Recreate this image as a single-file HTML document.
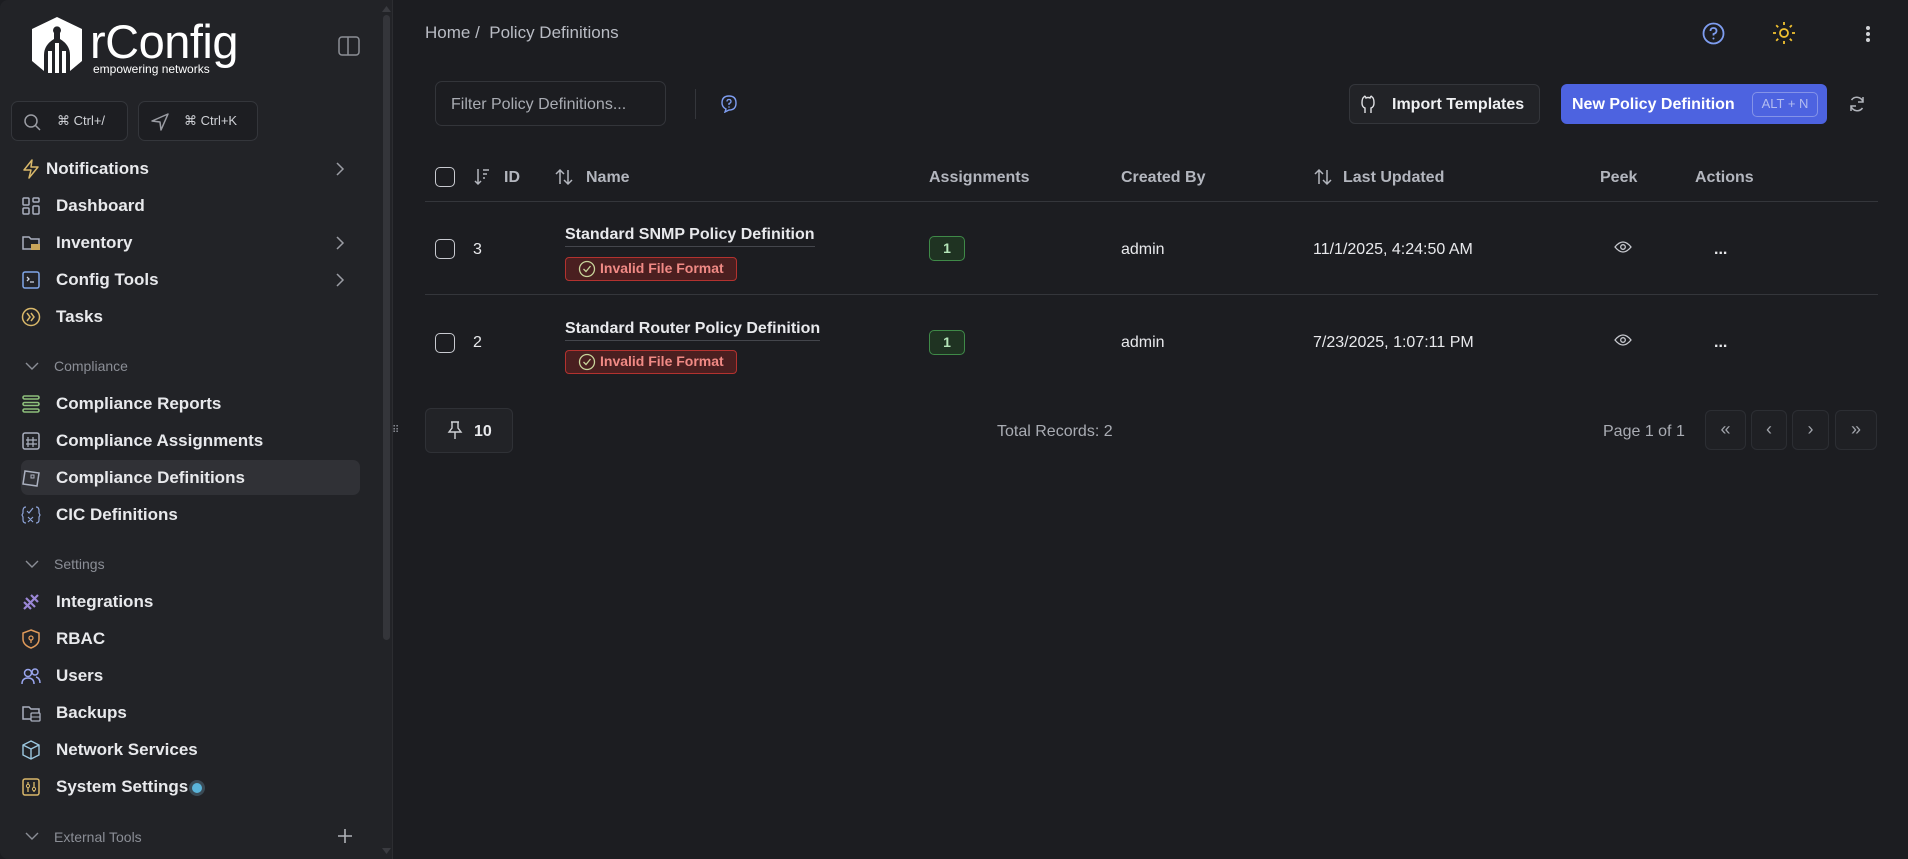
<!DOCTYPE html>
<html><head><meta charset="utf-8">
<style>
*{box-sizing:border-box;margin:0;padding:0}
body{width:1908px;height:859px;background:#1c1d21;font-family:"Liberation Sans",sans-serif;color:#e6e7ea;position:relative;overflow:hidden}
.abs{position:absolute}
#side{position:absolute;left:0;top:0;width:393px;height:859px;background:#222327;border-right:1px solid #2c2d31;border-radius:8px 0 0 8px}
.nav{position:absolute;left:56px;font-size:17px;font-weight:bold;color:#e8e9ec;white-space:nowrap}
.ico{position:absolute;left:21px;width:20px;height:20px}
.sec{position:absolute;left:54px;font-size:14px;color:#8b8e96}
.chev{position:absolute;left:333px}
.kbd{position:absolute;top:101px;height:40px;border:1px solid #34363b;border-radius:7px;background:#1d1e22;color:#cfd1d6;font-size:13px}
.hdr{position:absolute;top:169px;font-size:16px;font-weight:bold;color:#b3b6be}
.cell{position:absolute;font-size:16px;color:#e8e9ec}
.cb{position:absolute;left:435px;width:20px;height:20px;border:1.5px solid #c8cad0;border-radius:5px}
.badge{position:absolute;left:565px;width:172px;height:24px;border:1.5px solid #b3322f;background:#4a1f20;border-radius:4px;color:#f08a85;font-size:14px;font-weight:bold;padding-left:34px;line-height:21px}
.badge svg{position:absolute;left:12px;top:2px}
.one{position:absolute;left:929px;width:36px;height:25px;border:1.5px solid #3f8a48;background:#1f3322;color:#b5e6b9;font-size:14px;font-weight:bold;text-align:center;line-height:22px;border-radius:5px}
.pb{position:absolute;top:410px;height:40px;border:1px solid #2c2e33;border-radius:6px;background:#1f2024;color:#a0a3aa;text-align:center;line-height:36px;font-size:18px}
</style></head><body>
<div id="side">
  <svg class="abs" style="left:30px;top:15px" width="54" height="60" viewBox="0 0 54 60">
    <path d="M27 2 L52 14 L52 46 L40 56 L40 40 Q40 30 30 24 L30 18 A4 4 0 1 0 24 18 L24 24 Q14 30 14 40 L14 56 L2 46 L2 14 Z" fill="#fff"/>
    <path d="M27 28 L27 58 M20 36 Q20 44 20 58 M34 36 Q34 44 34 58" stroke="#fff" stroke-width="4" fill="none"/>
  </svg>
  <div class="abs" style="left:90px;top:14px;font-size:47px;color:#fff;letter-spacing:-0.5px">rConfig</div>
  <div class="abs" style="left:93px;top:62px;font-size:12px;color:#fff">empowering networks</div>
  <svg class="abs" style="left:338px;top:36px" width="22" height="20" viewBox="0 0 22 20"><rect x="1" y="1" width="20" height="18" rx="3" fill="none" stroke="#8c8f96" stroke-width="1.5"/><line x1="10" y1="1" x2="10" y2="19" stroke="#8c8f96" stroke-width="1.5"/></svg>
  <div class="kbd" style="left:11px;width:117px"><svg class="abs" style="left:11px;top:11px" width="18" height="18" viewBox="0 0 18 18"><circle cx="8" cy="8" r="6" fill="none" stroke="#9a9ca3" stroke-width="1.5"/><line x1="12.5" y1="12.5" x2="17" y2="17" stroke="#9a9ca3" stroke-width="1.5"/></svg><span class="abs" style="left:45px;top:11px">⌘ Ctrl+/</span></div>
  <div class="kbd" style="left:138px;width:120px"><svg class="abs" style="left:12px;top:11px" width="18" height="18" viewBox="0 0 18 18"><path d="M17 1 L1 8 L9 9 L10 17 Z" fill="none" stroke="#9a9ca3" stroke-width="1.5" stroke-linejoin="round"/></svg><span class="abs" style="left:45px;top:11px">⌘ Ctrl+K</span></div>

  <svg class="ico" style="top:159px" viewBox="0 0 20 20"><path d="M11 1 L3 11 L10 11 L8 19 L17 8 L10 8 Z" fill="none" stroke="#d9b86a" stroke-width="1.5" stroke-linejoin="round"/></svg>
  <div class="nav" style="left:46px;top:159px">Notifications</div>
  <svg class="chev" style="top:161px" width="14" height="16" viewBox="0 0 14 16"><path d="M4 2 L10 8 L4 14" fill="none" stroke="#9a9ca3" stroke-width="1.5"/></svg>
  <svg class="ico" style="top:196px" viewBox="0 0 20 20"><g fill="none" stroke="#aab0bf" stroke-width="1.5"><rect x="2" y="2" width="6" height="7" rx="1"/><rect x="12" y="2" width="6" height="4" rx="1"/><rect x="2" y="12" width="6" height="6" rx="1"/><rect x="12" y="10" width="6" height="8" rx="1"/></g></svg>
  <div class="nav" style="top:196px">Dashboard</div>
  <svg class="ico" style="top:233px" viewBox="0 0 20 20"><path d="M2 4 L8 4 L10 6 L18 6 L18 16 L2 16 Z" fill="none" stroke="#aab0bf" stroke-width="1.5"/><rect x="10" y="11" width="9" height="6" fill="#c9a55a"/></svg>
  <div class="nav" style="top:233px">Inventory</div>
  <svg class="chev" style="top:235px" width="14" height="16" viewBox="0 0 14 16"><path d="M4 2 L10 8 L4 14" fill="none" stroke="#9a9ca3" stroke-width="1.5"/></svg>
  <svg class="ico" style="top:270px" viewBox="0 0 20 20"><rect x="2" y="2" width="16" height="16" rx="2" fill="none" stroke="#7fa6e8" stroke-width="1.5"/><path d="M6 7 L8 9 L6 11 M9 12 L13 12" stroke="#cfd6e6" stroke-width="1.3" fill="none"/></svg>
  <div class="nav" style="top:270px">Config Tools</div>
  <svg class="chev" style="top:272px" width="14" height="16" viewBox="0 0 14 16"><path d="M4 2 L10 8 L4 14" fill="none" stroke="#9a9ca3" stroke-width="1.5"/></svg>
  <svg class="ico" style="top:307px" viewBox="0 0 20 20"><circle cx="10" cy="10" r="8.5" fill="none" stroke="#d9b86a" stroke-width="1.5"/><path d="M6 6 L9 10 L6 14 M10 6 L13 10 L10 14" stroke="#d9b86a" stroke-width="1.5" fill="none"/></svg>
  <div class="nav" style="top:307px">Tasks</div>

  <svg class="abs" style="left:24px;top:360px" width="16" height="12" viewBox="0 0 16 12"><path d="M2 3 L8 9 L14 3" fill="none" stroke="#8b8e96" stroke-width="1.4"/></svg><div class="sec" style="top:358px">Compliance</div>
  <svg class="ico" style="top:394px" viewBox="0 0 20 20"><g stroke="#8ec07c" stroke-width="1.6" fill="none"><rect x="2" y="2" width="16" height="3" rx="1.5"/><rect x="2" y="8.5" width="16" height="3" rx="1.5"/><rect x="2" y="15" width="16" height="3" rx="1.5"/></g></svg>
  <div class="nav" style="top:394px">Compliance Reports</div>
  <svg class="ico" style="top:431px" viewBox="0 0 20 20"><rect x="2" y="2" width="16" height="16" rx="2" fill="none" stroke="#aab0bf" stroke-width="1.5"/><path d="M7 6 V16 M12 6 V16 M5 9 H16 M5 13 H16" stroke="#aab0bf" stroke-width="1.2"/></svg>
  <div class="nav" style="top:431px">Compliance Assignments</div>
  <div class="abs" style="left:21px;top:460px;width:339px;height:35px;background:#303136;border-radius:7px"></div>
  <svg class="ico" style="top:468px" viewBox="0 0 20 20"><path d="M4 3 L18 5 L16 18 L2 16 Z" fill="none" stroke="#aab0bf" stroke-width="1.5"/><rect x="10" y="7" width="3" height="3" stroke="#aab0bf" fill="none"/></svg>
  <div class="nav" style="top:468px">Compliance Definitions</div>
  <svg class="ico" style="top:505px" viewBox="0 0 20 20"><path d="M5 2 Q2 2 2 6 V8 L1 10 L2 12 V15 Q2 18 5 18 M15 2 Q18 2 18 6 V8 L19 10 L18 12 V15 Q18 18 15 18 M7 12 L12 17 M12 12 L7 17 M6 6 L8 8 L12 3" stroke="#8ea4d8" stroke-width="1.2" fill="none"/></svg>
  <div class="nav" style="top:505px">CIC Definitions</div>

  <svg class="abs" style="left:24px;top:558px" width="16" height="12" viewBox="0 0 16 12"><path d="M2 3 L8 9 L14 3" fill="none" stroke="#8b8e96" stroke-width="1.4"/></svg><div class="sec" style="top:556px">Settings</div>
  <svg class="ico" style="top:592px" viewBox="0 0 20 20"><path d="M3 17 L17 3 M3 10 L10 17 M10 3 L17 10 M5 6 L14 15" stroke="#9b87d6" stroke-width="2.2" fill="none"/></svg>
  <div class="nav" style="top:592px">Integrations</div>
  <svg class="ico" style="top:629px" viewBox="0 0 20 20"><path d="M10 1 L18 4 V10 Q18 16 10 19 Q2 16 2 10 V4 Z" fill="none" stroke="#e09a5a" stroke-width="1.5"/><circle cx="10" cy="9" r="2" fill="none" stroke="#e09a5a" stroke-width="1.3"/><line x1="10" y1="11" x2="10" y2="14" stroke="#e09a5a" stroke-width="1.3"/></svg>
  <div class="nav" style="top:629px">RBAC</div>
  <svg class="ico" style="top:666px" viewBox="0 0 20 20"><g fill="none" stroke="#9aa6ee" stroke-width="1.5"><circle cx="7" cy="7" r="3.5"/><path d="M1 18 Q1 12 7 12 Q13 12 13 18"/><circle cx="14" cy="6" r="3"/><path d="M15 11 Q19 12 19 17"/></g></svg>
  <div class="nav" style="top:666px">Users</div>
  <svg class="ico" style="top:703px" viewBox="0 0 20 20"><path d="M2 4 L8 4 L10 6 L18 6 L18 16 L2 16 Z" fill="none" stroke="#aab0bf" stroke-width="1.5"/><rect x="10" y="10" width="9" height="8" rx="1" fill="#222327" stroke="#aab0bf" stroke-width="1.3"/><line x1="10" y1="14" x2="19" y2="14" stroke="#aab0bf"/></svg>
  <div class="nav" style="top:703px">Backups</div>
  <svg class="ico" style="top:740px" viewBox="0 0 20 20"><path d="M10 1 L18 5 V15 L10 19 L2 15 V5 Z M2 5 L10 9 L18 5 M10 9 V19" fill="none" stroke="#9cc8e0" stroke-width="1.4"/></svg>
  <div class="nav" style="top:740px">Network Services</div>
  <svg class="ico" style="top:777px" viewBox="0 0 20 20"><rect x="2" y="2" width="16" height="16" rx="2" fill="none" stroke="#d9b86a" stroke-width="1.5"/><path d="M7 5 V15 M13 5 V15" stroke="#d9b86a" stroke-width="1.3"/><circle cx="7" cy="9" r="1.6" fill="#222327" stroke="#d9b86a"/><circle cx="13" cy="12" r="1.6" fill="#222327" stroke="#d9b86a"/></svg>
  <div class="nav" style="top:777px">System Settings</div>
  <div class="abs" style="left:189px;top:780px;width:16px;height:16px;border-radius:50%;background:#3a4a55"></div>
  <div class="abs" style="left:192px;top:783px;width:10px;height:10px;border-radius:50%;background:#5ab4da"></div>

  <svg class="abs" style="left:24px;top:830px" width="16" height="12" viewBox="0 0 16 12"><path d="M2 3 L8 9 L14 3" fill="none" stroke="#8b8e96" stroke-width="1.4"/></svg><div class="sec" style="top:829px">External Tools</div>
  <svg class="abs" style="left:337px;top:828px" width="16" height="16" viewBox="0 0 16 16"><path d="M8 1 V15 M1 8 H15" stroke="#b0b2b8" stroke-width="1.6"/></svg>
  <div class="abs" style="left:383px;top:15px;width:7px;height:625px;border-radius:4px;background:#34353a"></div>
  <svg class="abs" style="left:382px;top:6px" width="9" height="6" viewBox="0 0 9 6"><path d="M0 6 L4.5 0 L9 6Z" fill="#3a3b40"/></svg>
  <svg class="abs" style="left:382px;top:848px" width="9" height="6" viewBox="0 0 9 6"><path d="M0 0 L4.5 6 L9 0Z" fill="#3a3b40"/></svg>
</div>
<div class="abs" style="left:392px;top:425px;color:#8b8e96;font-size:10px">⠿</div>

<!-- top bar -->
<div class="abs" style="left:425px;top:23px;font-size:17px;color:#b9bcc4">Home /&nbsp; Policy Definitions</div>
<svg class="abs" style="left:1702px;top:22px" width="23" height="23" viewBox="0 0 23 23"><circle cx="11.5" cy="11.5" r="10" fill="none" stroke="#7e9df0" stroke-width="1.8"/><path d="M8.5 9 Q8.5 6 11.5 6 Q14.5 6 14.5 9 Q14.5 11 11.5 12 V13.5" fill="none" stroke="#7e9df0" stroke-width="1.8"/><circle cx="11.5" cy="16.5" r="1" fill="#7e9df0"/></svg>
<svg class="abs" style="left:1772px;top:21px" width="24" height="24" viewBox="0 0 24 24"><circle cx="12" cy="12" r="4" fill="none" stroke="#f2c230" stroke-width="1.8"/><g stroke="#f2c230" stroke-width="1.8"><path d="M12 1v3M12 20v3M1 12h3M20 12h3M4.2 4.2l2 2M17.8 17.8l2 2M4.2 19.8l2-2M17.8 6.2l2-2"/></g></svg>
<div class="abs" style="left:1866px;top:26px;width:4px;height:4px;border-radius:2px;background:#d0d2d6;box-shadow:0 6px 0 #d0d2d6,0 12px 0 #d0d2d6"></div>

<!-- toolbar -->
<div class="abs" style="left:435px;top:81px;width:231px;height:45px;border:1px solid #33353a;border-radius:7px;color:#a9acb3;font-size:16px;padding:14px 0 0 15px">Filter Policy Definitions...</div>
<div class="abs" style="left:695px;top:89px;width:1px;height:30px;background:#34363b"></div>
<svg class="abs" style="left:721px;top:95px" width="16" height="18" viewBox="0 0 16 18"><path d="M8 1 Q15 1 15 8 Q15 15 8 15 L4 17 L5 14 Q1 12 1 8 Q1 1 8 1Z" fill="none" stroke="#7e9df0" stroke-width="1.4"/><path d="M6 6.5 Q6 4.5 8 4.5 Q10 4.5 10 6.5 Q10 8 8 8.5 V10" fill="none" stroke="#7e9df0" stroke-width="1.3"/><circle cx="8" cy="12" r=".8" fill="#7e9df0"/></svg>
<div class="abs" style="left:1349px;top:84px;width:191px;height:40px;border:1px solid #34363b;border-radius:6px;background:#222327;color:#f0f1f3;font-size:16px;font-weight:bold;padding:11px 0 0 42px">Import Templates</div>
<svg class="abs" style="left:1360px;top:94px" width="16" height="20" viewBox="0 0 16 20"><path d="M5 19 V14 Q2 13 2 9 Q2 4 4 3 Q5 1 6 4 Q8 3 10 4 Q11 1 12 3 Q14 4 14 9 Q14 13 11 14 V19" fill="none" stroke="#e0e1e4" stroke-width="1.4"/></svg>
<div class="abs" style="left:1561px;top:84px;width:266px;height:40px;border-radius:6px;background:#4d63e0;color:#fff;font-size:16px;font-weight:bold;padding:12px 0 0 11px">New Policy Definition</div>
<div class="abs" style="left:1752px;top:92px;width:66px;height:25px;border:1.5px solid #8493e8;border-radius:5px;color:#b3bcf0;font-size:13px;text-align:center;line-height:22px">ALT + N</div>
<svg class="abs" style="left:1848px;top:95px" width="18" height="18" viewBox="0 0 18 18"><path d="M15 7 A6.5 6.5 0 0 0 3.5 5 M3 11 A6.5 6.5 0 0 0 14.5 13" fill="none" stroke="#b0b3ba" stroke-width="1.5"/><path d="M15 2 V7 H10 M3 16 V11 H8" fill="none" stroke="#b0b3ba" stroke-width="1.5"/></svg>

<!-- header -->
<div class="cb" style="top:167px"></div>
<svg class="abs" style="left:474px;top:168px" width="16" height="18" viewBox="0 0 16 18"><path d="M4 1 V16 M1 13 L4 16 L7 13 M9 2 H15 M9 6 H13 M9 10 H11" stroke="#b3b6be" stroke-width="1.5" fill="none"/></svg>
<div class="hdr" style="left:504px">ID</div>
<svg class="abs" style="left:555px;top:168px" width="18" height="18" viewBox="0 0 18 18"><path d="M5 16 V2 M1 6 L5 2 L9 6 M13 2 V16 M9 12 L13 16 L17 12" stroke="#b3b6be" stroke-width="1.5" fill="none"/></svg>
<div class="hdr" style="left:586px">Name</div>
<div class="hdr" style="left:929px">Assignments</div>
<div class="hdr" style="left:1121px">Created By</div>
<svg class="abs" style="left:1314px;top:168px" width="18" height="18" viewBox="0 0 18 18"><path d="M5 16 V2 M1 6 L5 2 L9 6 M13 2 V16 M9 12 L13 16 L17 12" stroke="#b3b6be" stroke-width="1.5" fill="none"/></svg>
<div class="hdr" style="left:1343px">Last Updated</div>
<div class="hdr" style="left:1600px">Peek</div>
<div class="hdr" style="left:1695px">Actions</div>
<div class="abs" style="left:425px;top:201px;width:1453px;height:1px;background:#34363b"></div>
<div class="abs" style="left:425px;top:294px;width:1453px;height:1px;background:#34363b"></div>

<!-- row 1 -->
<div class="cb" style="top:239px"></div>
<div class="cell" style="left:473px;top:241px">3</div>
<div class="cell" style="left:565px;top:226px;font-weight:bold;border-bottom:1px solid #44464c;padding-bottom:2px">Standard SNMP Policy Definition</div>
<div class="badge" style="top:257px"><svg width="18" height="18" viewBox="0 0 18 18"><circle cx="9" cy="9" r="7.5" fill="none" stroke="#c8d49a" stroke-width="1.3"/><path d="M5.5 9 L8 11.5 L12.5 6" fill="none" stroke="#c8d49a" stroke-width="1.3"/></svg>Invalid File Format</div>
<div class="one" style="top:236px">1</div>
<div class="cell" style="left:1121px;top:241px">admin</div>
<div class="cell" style="left:1313px;top:241px">11/1/2025, 4:24:50 AM</div>
<svg class="abs" style="left:1614px;top:240px" width="18" height="14" viewBox="0 0 18 14"><path d="M1 7 Q9 -3 17 7 Q9 17 1 7Z" fill="none" stroke="#c8cad0" stroke-width="1.3"/><circle cx="9" cy="7" r="2.3" fill="none" stroke="#c8cad0" stroke-width="1.3"/></svg>
<div class="cell" style="left:1714px;top:241px;font-weight:bold">...</div>

<!-- row 2 -->
<div class="cb" style="top:333px"></div>
<div class="cell" style="left:473px;top:334px">2</div>
<div class="cell" style="left:565px;top:320px;font-weight:bold;border-bottom:1px solid #44464c;padding-bottom:2px">Standard Router Policy Definition</div>
<div class="badge" style="top:350px"><svg width="18" height="18" viewBox="0 0 18 18"><circle cx="9" cy="9" r="7.5" fill="none" stroke="#c8d49a" stroke-width="1.3"/><path d="M5.5 9 L8 11.5 L12.5 6" fill="none" stroke="#c8d49a" stroke-width="1.3"/></svg>Invalid File Format</div>
<div class="one" style="top:330px">1</div>
<div class="cell" style="left:1121px;top:334px">admin</div>
<div class="cell" style="left:1313px;top:334px">7/23/2025, 1:07:11 PM</div>
<svg class="abs" style="left:1614px;top:333px" width="18" height="14" viewBox="0 0 18 14"><path d="M1 7 Q9 -3 17 7 Q9 17 1 7Z" fill="none" stroke="#c8cad0" stroke-width="1.3"/><circle cx="9" cy="7" r="2.3" fill="none" stroke="#c8cad0" stroke-width="1.3"/></svg>
<div class="cell" style="left:1714px;top:334px;font-weight:bold">...</div>

<!-- footer -->
<div class="abs" style="left:425px;top:408px;width:88px;height:45px;border:1px solid #2f3136;border-radius:6px;background:#222327"></div>
<svg class="abs" style="left:447px;top:420px" width="16" height="20" viewBox="0 0 16 20"><path d="M4 2 H12 M5 2 V8 L2 12 H14 L11 8 V2 M8 12 V19" fill="none" stroke="#d0d2d6" stroke-width="1.4"/></svg>
<div class="cell" style="left:474px;top:423px;font-weight:bold">10</div>
<div class="cell" style="left:997px;top:423px;color:#a9acb3">Total Records: 2</div>
<div class="cell" style="left:1603px;top:423px;color:#a9acb3">Page 1 of 1</div>
<div class="pb" style="left:1705px;width:41px">«</div>
<div class="pb" style="left:1751px;width:36px">‹</div>
<div class="pb" style="left:1792px;width:37px">›</div>
<div class="pb" style="left:1835px;width:42px">»</div>
</body></html>
